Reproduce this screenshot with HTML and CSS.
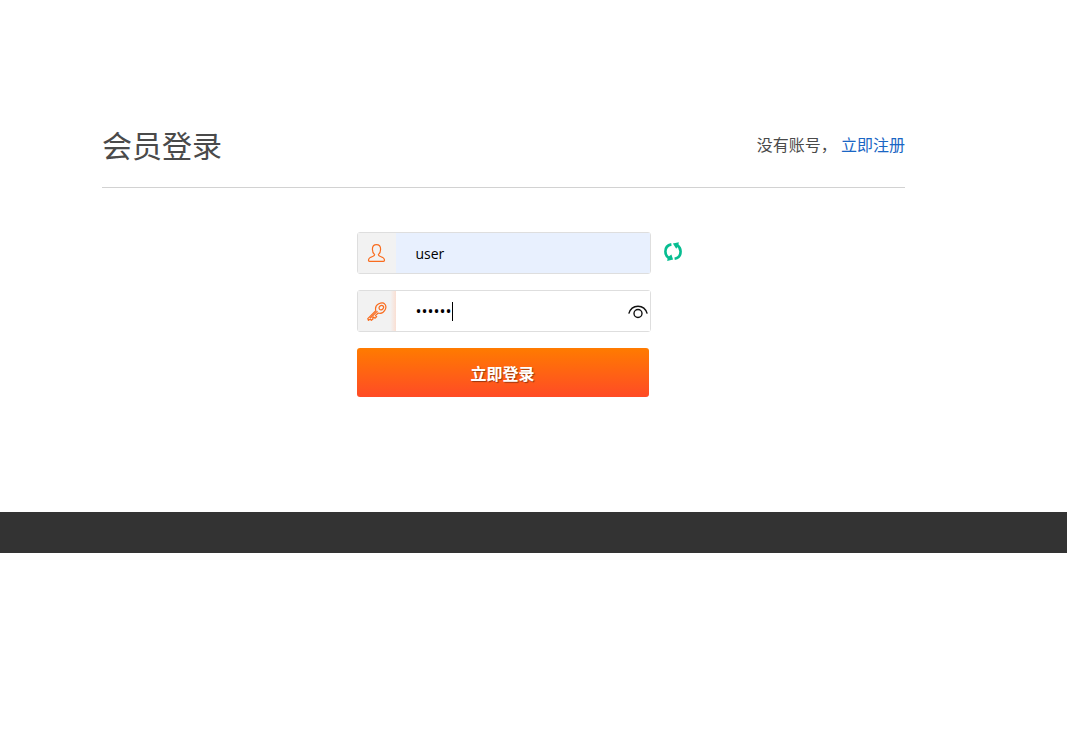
FILE: index.html
```html
<!DOCTYPE html>
<html lang="zh-CN">
<head>
    <meta charset="UTF-8">
    <meta name="viewport" content="width=device-width, initial-scale=1.0">
    <title>会员登录</title>
    <link rel="stylesheet" href="styles.css">
</head>
<body>
    <div class="container">
        <div class="header">
            <h1>会员登录</h1>
            <p>没有账号， <a href="#">立即注册</a></p>
        </div>

        <form class="login-form">
            <div class="field">
                <label class="field-icon" for="username" aria-label="用户名">
                    <svg width="20" height="20" viewBox="0 0 20 20">
                        <path d="M7.6 11.6C6 10.2 5.4 8.5 5.4 6.2C5.4 3.4 7 1.6 9.5 1.6S13.6 3.4 13.6 6.2C13.6 8.5 13 10.2 11.4 11.6C11.2 12.6 11.8 13 13.4 13.5C16 14.3 17.5 15 17.5 17.3Q17.5 18.3 16.5 18.3H2.5Q1.5 18.3 1.5 17.3C1.5 15 3 14.3 5.6 13.5C7.2 13 7.8 12.6 7.6 11.6Z"/>
                    </svg>
                </label>
                <input class="username" type="text" id="username" value="user" autocomplete="off">
                <button class="refresh" type="button" aria-label="刷新">
                    <svg width="20" height="20" viewBox="0 0 20 20">
                        <path class="arc" d="M8.4 2.4C4.8 3 2.4 5.8 2.4 9.6C2.4 12.3 3.5 14.5 5.8 16M11.6 16.8C15.2 16.2 17.6 13.4 17.6 9.6C17.6 6.9 16.5 4.7 14.2 3.2"/>
                        <path class="head" d="M9.9 1.6L15.8 0.2L15.2 4L13.2 6.8ZM10.1 17.6L4.2 19L4.8 15.2L8.4 12.6Z"/>
                    </svg>
                </button>
            </div>
            <div class="field">
                <label class="field-icon shaded" for="password" aria-label="密码">
                    <svg width="20" height="20" viewBox="0 0 20 20">
                        <path d="M8.8 9.8C8 6.7 9.3 4 11.8 2.8C14.2 1.7 16.6 1.7 17.8 3.2C19.2 4.7 19.1 7 18 9C16.6 11.6 14 12.8 11.1 12L8.5 14.5L9.6 15.7L8 17.3L6.6 16.1L5.6 17L6.1 17.9L4.4 19.3L3.1 18.2L1.4 19.3L0.8 17.6Z"/>
                        <path d="M12.8 5.2C13.9 4.3 15.3 4.2 16.1 5C16.9 5.8 16.7 7 15.8 8C14.9 9 13.4 9.2 12.6 8.4C11.8 7.6 11.8 6.1 12.8 5.2ZM3 17.3L10.5 10.1"/>
                    </svg>
                </label>
                <input class="password" type="password" id="password" value="123456">
                <span class="caret"></span>
                <button class="eye" type="button" aria-label="显示密码">
                    <svg width="20" height="16" viewBox="0 0 20 16">
                        <path d="M0.8 9.6C2.2 4.8 5.6 2.2 10 2.2S17.8 4.8 19.2 9.6"/>
                        <circle cx="10" cy="9.5" r="4"/>
                    </svg>
                </button>
            </div>
            <button class="submit" type="submit">立即登录</button>
        </form>
    </div>

    <footer></footer>
</body>
</html>
```

FILE: styles.css
```css
body {
    margin: 0;
    background: #fff;
    color: #4a4a4a;
    font-family: "Open Sans", "Noto Sans CJK SC", sans-serif;
    font-size: 16px;
}
.container {
    padding: 124px 162px 115px 102px;
}
.header {
    display: flex;
    justify-content: space-between;
    border-bottom: 1px solid #d2d2d2;
    padding-bottom: 19px;
}
.header h1 {
    margin: 0;
    font-size: 30px;
    font-weight: 400;
    line-height: 44px;
}
.header p {
    margin: 0;
    line-height: 42px;
}
.header a {
    color: #1a66c4;
    text-decoration: none;
}
.login-form {
    width: 294px;
    margin: 44px auto 0;
}
.field {
    position: relative;
    display: flex;
    height: 40px;
    margin-bottom: 16px;
    border: 1px solid #dedede;
    border-radius: 3px;
}
.field-icon {
    display: flex;
    align-items: center;
    justify-content: center;
    width: 38px;
    background: #f2f2f2;
}
.field-icon.shaded {
    background: linear-gradient(to right, #f2f2f2 85%, #fadfd3);
}
.field-icon path {
    fill: none;
    stroke: #f96c1e;
    stroke-width: 1.2;
}
.field input {
    flex: 1;
    min-width: 0;
    padding: 0 20px;
    border: 0;
    outline: 0;
    background: #fff;
    color: #000;
    font-family: "Open Sans", sans-serif;
    font-size: 14px;
}
.field .username {
    background: #e8f0fe;
}
.field .password {
    font-size: 16px;
}
.caret {
    position: absolute;
    top: 11px;
    left: 94px;
    width: 1px;
    height: 19px;
    background: #000;
}
button {
    border: 0;
    padding: 0;
    background: none;
    cursor: pointer;
}
.refresh,
.eye {
    position: absolute;
    display: flex;
}
.refresh {
    top: 9px;
    right: -33px;
}
.arc {
    fill: none;
    stroke: #07bd91;
    stroke-width: 2.6;
}
.head {
    fill: #07bd91;
}
.eye {
    top: 13px;
    right: 2px;
}
.eye path,
.eye circle {
    fill: none;
    stroke: #111;
    stroke-width: 1.4;
}
.submit {
    display: block;
    width: 292px;
    height: 49px;
    border-radius: 3px;
    background: linear-gradient(#ff7b00, #ff4b26);
    color: #fff;
    font-family: "Noto Sans CJK SC", sans-serif;
    font-size: 16px;
    font-weight: bold;
    text-shadow: 1px 1px 1px rgba(0, 0, 0, 0.4);
}
footer {
    height: 41px;
    background: #333;
}
```
